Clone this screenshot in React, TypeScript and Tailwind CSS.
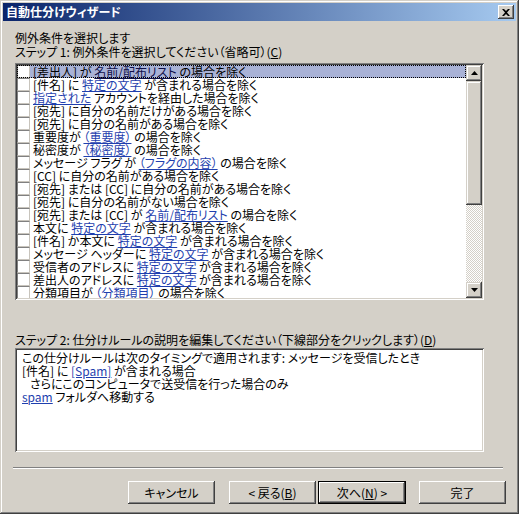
import React from "react";

type Seg = [string, boolean?];

const rows: Seg[][] = [
  [["[差出人] が "], ["名前/配布リスト", true], [" の場合を除く"]],
  [["[件名] に "], ["特定の文字", true], [" が含まれる場合を除く"]],
  [["指定された", true], [" アカウントを経由した場合を除く"]],
  [["[宛先] に自分の名前だけがある場合を除く"]],
  [["[宛先] に自分の名前がある場合を除く"]],
  [["重要度が "], ["（重要度）", true], [" の場合を除く"]],
  [["秘密度が "], ["（秘密度）", true], [" の場合を除く"]],
  [["メッセージ フラグ が "], ["（フラグの内容）", true], [" の場合を除く"]],
  [["[CC] に自分の名前がある場合を除く"]],
  [["[宛先] または [CC] に自分の名前がある場合を除く"]],
  [["[宛先] に自分の名前がない場合を除く"]],
  [["[宛先] または [CC] が "], ["名前/配布リスト", true], [" の場合を除く"]],
  [["本文に "], ["特定の文字", true], [" が含まれる場合を除く"]],
  [["[件名] か本文に "], ["特定の文字", true], [" が含まれる場合を除く"]],
  [["メッセージ ヘッダーに "], ["特定の文字", true], [" が含まれる場合を除く"]],
  [["受信者のアドレスに "], ["特定の文字", true], [" が含まれる場合を除く"]],
  [["差出人のアドレスに "], ["特定の文字", true], [" が含まれる場合を除く"]],
  [["分類項目が "], ["（分類項目）", true], [" の場合を除く"]],
];

const scrollBtn =
  "bg-[#d4d0c8] shadow-[inset_-1px_-1px_#404040,inset_1px_1px_#d4d0c8,inset_-2px_-2px_#808080,inset_2px_2px_#ffffff]";
const sunken =
  "bg-white shadow-[inset_1px_1px_#808080,inset_-1px_-1px_#ffffff,inset_2px_2px_#404040,inset_-2px_-2px_#d4d0c8]";
const btnNormal =
  "w-[87px] bg-[#d4d0c8] shadow-[inset_-1px_-1px_#404040,inset_1px_1px_#ffffff,inset_-2px_-2px_#808080,inset_2px_2px_#d4d0c8]";
const btnDefault =
  "w-[88px] border border-black bg-[#d4d0c8] shadow-[inset_-1px_-1px_#404040,inset_1px_1px_#ffffff,inset_-2px_-2px_#808080]";

function Arrow({ up }: { up?: boolean }) {
  return (
    <svg width="7" height="4" viewBox="0 0 7 4">
      {up ? <path d="M3.5 0 L7 4 L0 4 Z" fill="#000" /> : <path d="M0 0 L7 0 L3.5 4 Z" fill="#000" />}
    </svg>
  );
}

function Button({ children, def }: { children: React.ReactNode; def?: boolean }) {
  return (
    <div
      className={
        "h-[23px] flex items-center justify-center text-[12px] leading-[13px] text-black " +
        (def ? btnDefault : btnNormal)
      }
    >
      {children}
    </div>
  );
}

export default function App() {
  return (
    <div className="w-[519px] h-[514px] bg-[#d4d0c8] p-[3px] flex flex-col font-['Noto_Sans_CJK_JP','Noto_Sans',sans-serif] [font-feature-settings:'palt'] text-black shadow-[inset_-1px_-1px_#404040,inset_1px_1px_#d4d0c8,inset_-2px_-2px_#808080,inset_2px_2px_#ffffff]">
      {/* Title bar */}
      <div className="h-[18px] flex items-center justify-between bg-[linear-gradient(to_right,#0a246a,#a6caf0)] pl-[3px] pr-[2px]">
        <span className="text-white font-bold text-[12px] leading-[18px]">自動仕分けウィザード</span>
        <div className="w-[16px] h-[14px] flex items-center justify-center bg-[#d4d0c8] shadow-[inset_-1px_-1px_#404040,inset_1px_1px_#ffffff,inset_-2px_-2px_#808080]">
          <svg width="8" height="7" viewBox="0 0 8 7">
            <path d="M0 0h2l2 2 2-2h2L5 3.5 8 7H6L4 5 2 7H0l3-3.5z" fill="#000" />
          </svg>
        </div>
      </div>

      <div className="pl-[12px] flex flex-col">
        <div className="mt-[10px] h-[14px] text-[12px] leading-[14px]">例外条件を選択します</div>
        <div className="h-[14px] text-[12px] leading-[14px]">
          ステップ 1: 例外条件を選択してください（省略可）(<span className="underline">C</span>)
        </div>

        {/* List box */}
        <div className={"mt-[4px] w-[469px] h-[237px] p-[2px] flex " + sunken}>
          <div className="flex-1 overflow-hidden flex flex-col">
            {rows.map((segs, i) => (
              <div
                key={i}
                className={
                  "h-[13px] shrink-0 flex items-center " +
                  (i === 0 ? "bg-[#a9b2d6] outline outline-1 outline-dotted outline-black -outline-offset-1" : "")
                }
              >
                <div className="w-[13px] h-[13px] shrink-0 bg-white border-t border-l border-[#808080] border-r border-b border-r-[#c8c4bc] border-b-[#c8c4bc]" />
                <span className="ml-[3px] text-[12px] leading-[13px] whitespace-pre">
                  {segs.map(([t, link], j) =>
                    link ? (
                      <span key={j} className={"underline " + (i === 0 ? "text-[#10104a]" : "text-[#1f3fae]")}>
                        {t}
                      </span>
                    ) : (
                      <span key={j}>{t}</span>
                    )
                  )}
                </span>
              </div>
            ))}
          </div>
          {/* Scrollbar */}
          <div className="w-[16px] flex flex-col">
            <div className={"h-[16px] flex items-center justify-center " + scrollBtn}>
              <Arrow up />
            </div>
            <div className={"h-[124px] " + scrollBtn} />
            <div className="flex-1 bg-[image:repeating-conic-gradient(#d4d0c8_0_25%,#ffffff_0_50%)] bg-[length:2px_2px]" />
            <div className={"h-[16px] flex items-center justify-center " + scrollBtn}>
              <Arrow />
            </div>
          </div>
        </div>

        <div className="mt-[33px] h-[14px] text-[12px] leading-[14px]">
          ステップ 2: 仕分けルールの説明を編集してください（下線部分をクリックします）(<span className="underline">D</span>)
        </div>

        {/* Description box */}
        <div className={"mt-[1px] w-[469px] h-[104px] pt-[3px] pl-[7px] " + sunken}>
          <div className="text-[12px] leading-[13px] whitespace-pre">この仕分けルールは次のタイミングで適用されます: メッセージを受信したとき</div>
          <div className="text-[12px] leading-[13px] whitespace-pre">
            [件名] に <span className="underline text-[#1f3fae]">[Spam]</span> が含まれる場合
          </div>
          <div className="text-[12px] leading-[13px] whitespace-pre pl-[8px]">さらにこのコンピュータで送受信を行った場合のみ</div>
          <div className="text-[12px] leading-[13px] whitespace-pre">
            <span className="underline text-[#1f3fae]">spam</span> フォルダへ移動する
          </div>
        </div>
      </div>

      {/* Separator */}
      <div className="mt-[15px] ml-[10px] w-[490px] h-[2px] border-t border-[#808080] border-b border-b-white" />

      {/* Buttons */}
      <div className="mt-[12px] flex pl-[125px]">
        <Button>キャンセル</Button>
        <div className="w-[14px]" />
        <Button>
          &lt; 戻る(<span className="underline">B</span>)
        </Button>
        <div className="w-[2px]" />
        <Button def>
          次へ(<span className="underline">N</span>) &gt;
        </Button>
        <div className="w-[13px]" />
        <Button>完了</Button>
      </div>
    </div>
  );
}
